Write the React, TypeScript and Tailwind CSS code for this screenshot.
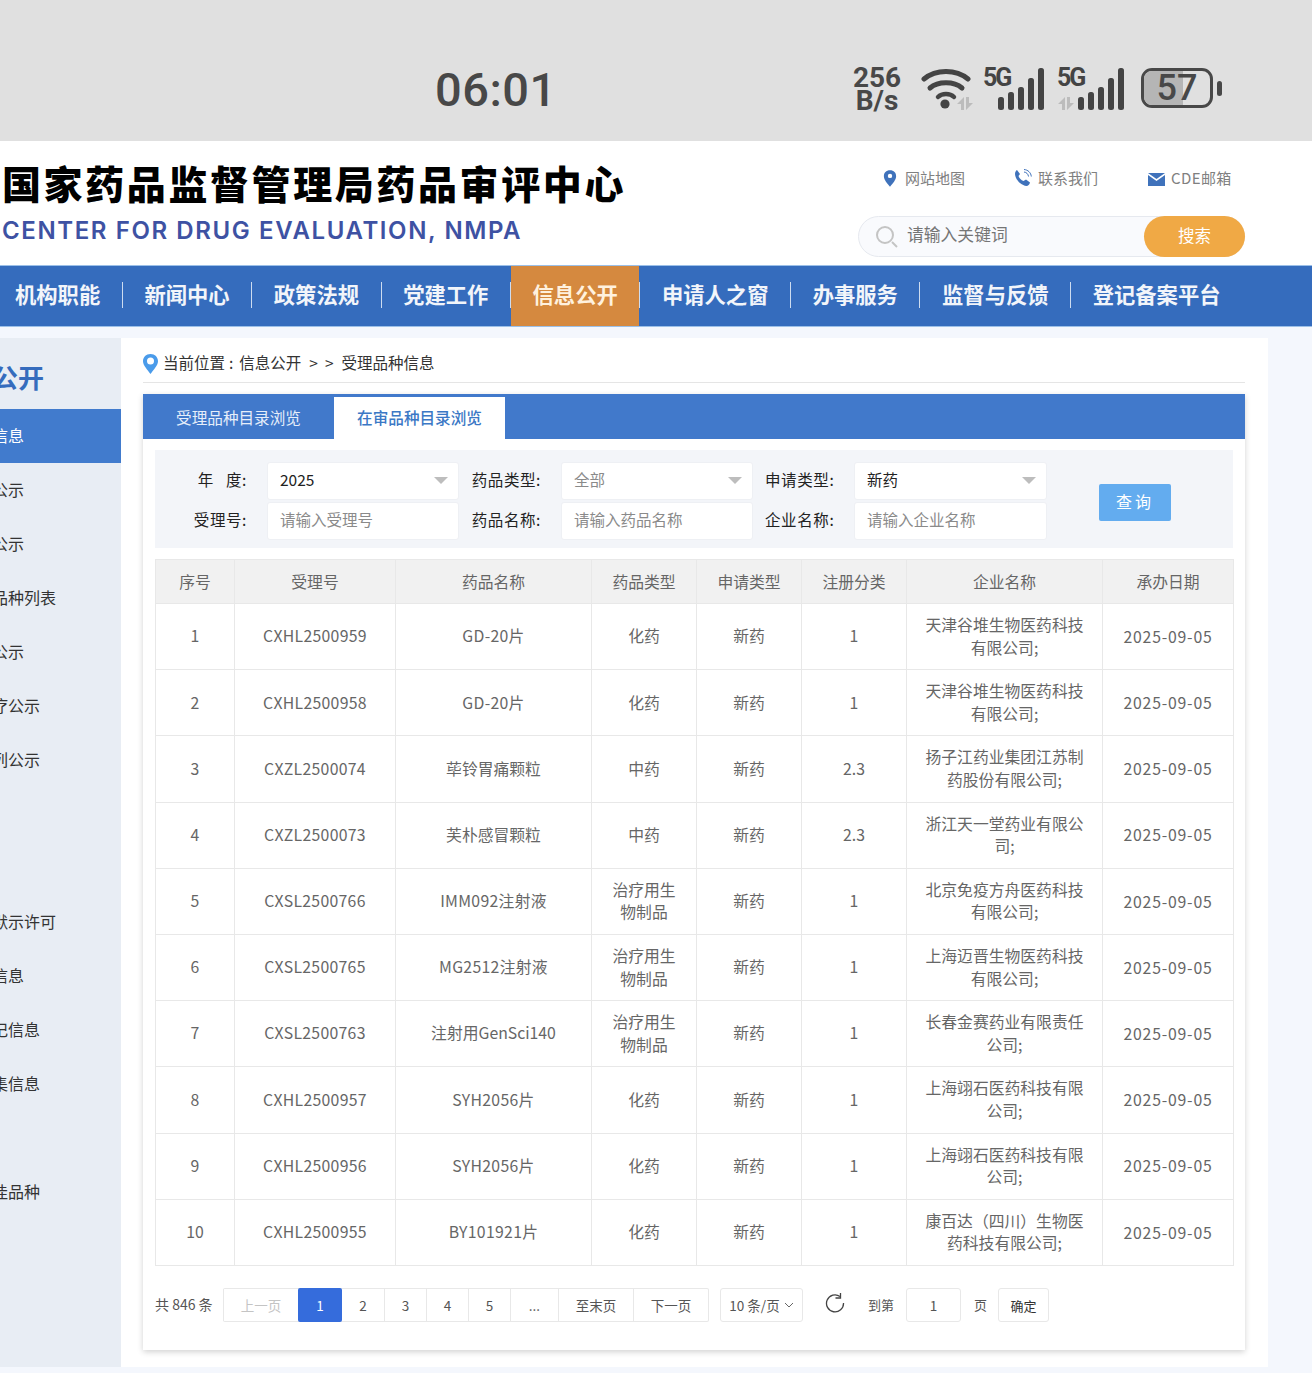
import React from 'react'

const font = { fontFamily: '"Noto Sans CJK SC", Inter, sans-serif' }

const navItems = ['机构职能', '新闻中心', '政策法规', '党建工作', '信息公开', '申请人之窗', '办事服务', '监督与反馈', '登记备案平台']
const sideItems = ['公示', '公示', '品种列表', '公示', '疗公示', '列公示', '', '', '默示许可', '信息', '记信息', '集信息', '', '佳品种']

const rows = [
  ['1', 'CXHL2500959', 'GD-20片', '化药', '新药', '1', '天津谷堆生物医药科技有限公司;'],
  ['2', 'CXHL2500958', 'GD-20片', '化药', '新药', '1', '天津谷堆生物医药科技有限公司;'],
  ['3', 'CXZL2500074', '荜铃胃痛颗粒', '中药', '新药', '2.3', '扬子江药业集团江苏制药股份有限公司;'],
  ['4', 'CXZL2500073', '芙朴感冒颗粒', '中药', '新药', '2.3', '浙江天一堂药业有限公司;'],
  ['5', 'CXSL2500766', 'IMM092注射液', '治疗用生物制品', '新药', '1', '北京免疫方舟医药科技有限公司;'],
  ['6', 'CXSL2500765', 'MG2512注射液', '治疗用生物制品', '新药', '1', '上海迈晋生物医药科技有限公司;'],
  ['7', 'CXSL2500763', '注射用GenSci140', '治疗用生物制品', '新药', '1', '长春金赛药业有限责任公司;'],
  ['8', 'CXHL2500957', 'SYH2056片', '化药', '新药', '1', '上海翊石医药科技有限公司;'],
  ['9', 'CXHL2500956', 'SYH2056片', '化药', '新药', '1', '上海翊石医药科技有限公司;'],
  ['10', 'CXHL2500955', 'BY101921片', '化药', '新药', '1', '康百达（四川）生物医药科技有限公司;'],
]

const heads = ['序号', '受理号', '药品名称', '药品类型', '申请类型', '注册分类', '企业名称', '承办日期']

function Arrows({ x, y }: { x: number; y: number }) {
  return (
    <g transform={`translate(${x} ${y})`} fill="#bcbcbc">
      <path d="M0 7L7 0v13H4V7z" />
      <path d="M9 0h3v6h4l-7 7z" />
    </g>
  )
}

function Signal({ arrows }: { arrows?: boolean }) {
  const left = arrows ? 21 : 15
  return (
    <div className={`relative h-[44px] ${arrows ? 'ml-[12px] w-[67px]' : 'ml-[10px] w-[62px]'}`}>
      <span className="absolute left-0 top-[-3px] text-[25px] font-bold leading-[26px] tracking-[-2px] text-[#444]">5G</span>
      <svg width="67" height="44" viewBox="0 0 67 44" className="absolute left-0 top-0">
        {arrows && <Arrows x={1} y={29} />}
        <rect x={left} y="29" width="6" height="13" rx="2.500" fill="#444" />
        <rect x={left + 10} y="24" width="6" height="18" rx="2.500" fill="#444" />
        <rect x={left + 20} y="19" width="6" height="23" rx="2.500" fill="#444" />
        <rect x={left + 30} y="10" width="6" height="32" rx="2.500" fill="#444" />
        <rect x={left + 40} y="0" width="6" height="42" rx="2.500" fill="#444" />
      </svg>
    </div>
  )
}

function StatusBar() {
  return (
    <div className="flex h-[141px] items-start bg-[#e0e0e0] pl-[435px] pt-[68px] text-[#484848]" style={{ fontFamily: 'Roboto, sans-serif' }}>
      <div className="w-[418px] text-[47px] font-medium leading-[44px] tracking-[0.5px]">06:01</div>
      <div className="-mt-[2px] flex w-[48px] flex-col items-center font-bold">
        <span className="text-[28px] leading-[23px]">256</span>
        <span className="text-[28px] leading-[23px]">B/s</span>
      </div>
      <svg width="52" height="44" viewBox="0 0 52 44" className="ml-[20px]">
        <path d="M3 11C15 1 35 1 47 11" fill="none" stroke="#444" strokeWidth="5" strokeLinecap="round" />
        <path d="M9 20C17 13 33 13 41 20" fill="none" stroke="#444" strokeWidth="5" strokeLinecap="round" />
        <path d="M17 29C21 25 29 25 33 29" fill="none" stroke="#444" strokeWidth="4.500" strokeLinecap="round" />
        <circle cx="24" cy="36" r="4.600" fill="#444" />
        <Arrows x={36} y={29} />
      </svg>
      <Signal />
      <Signal arrows />
      <div className="ml-[17px] flex items-center gap-[4px]">
        <div className="relative flex h-[40px] w-[72px] items-center justify-center overflow-hidden rounded-[11px] border-[3px] border-[#484848]">
          <div className="absolute inset-y-0 left-0 w-[39px] bg-[#b5b5b5]" />
          <span className="relative text-[36px] font-medium leading-[34px]">57</span>
        </div>
        <div className="h-[15px] w-[5px] rounded-full bg-[#484848]" />
      </div>
    </div>
  )
}

function Header() {
  return (
    <div className="flex h-[124px] bg-white">
      <div className="w-[858px] pl-[2px] pt-[12px]">
        <div className="text-[39px] font-black leading-[58px] tracking-[2.600px] text-black">国家药品监督管理局药品审评中心</div>
        <div className="mt-[4px] text-[24px] font-semibold leading-[32px] tracking-[1.600px] text-[#3e52a3]" style={{ fontFamily: 'Inter, sans-serif' }}>
          CENTER FOR DRUG EVALUATION, NMPA
        </div>
      </div>
      <div className="w-[387px]">
        <div className="flex h-[75px] items-center pl-[25px] pb-[1px] text-[15px] text-[#808080]">
          <svg width="14" height="19" viewBox="0 0 16 19">
            <path d="M8 0C3.600 0 1 3 1 6.800 1 11 5 15 8 19c3-4 7-8 7-12.200C15 3 12.400 0 8 0z" fill="#3f72bb" />
            <circle cx="8" cy="6.500" r="2.500" fill="#fff" />
          </svg>
          <span className="ml-[8px] w-[109px]">网站地图</span>
          <svg width="18" height="18" viewBox="0 0 18 18">
            <path d="M3 1l3 4-1.500 2c1 2.500 2.500 4 5 5L12 10.500l4 3c-.5 2-2 3.500-3.500 3.500C7 16.500 1.500 11 1 5c0-2 1-3.500 2-4z" fill="#3f72bb" />
            <path d="M10 3c2.500.3 4.200 2 4.500 4.500M10 .5c4 .3 7 3.300 7.300 7" fill="none" stroke="#3f72bb" strokeWidth="1" />
          </svg>
          <span className="ml-[6px] w-[110px]">联系我们</span>
          <svg width="17" height="13" viewBox="0 0 17 13" className="mt-[3px]">
            <path d="M0 0h17L8.500 6z" fill="#3f72bb" />
            <path d="M0 2l8.500 6L17 2v11H0z" fill="#3f72bb" />
          </svg>
          <span className="ml-[6px] tracking-[0.4px]">CDE邮箱</span>
        </div>
        <div className="flex h-[41px] items-center rounded-full border border-[#e6e9ef] bg-[#f9fafd]">
          <svg width="24" height="24" viewBox="0 0 24 24" className="ml-[16px]">
            <circle cx="10" cy="10" r="8" fill="none" stroke="#c4c4c4" strokeWidth="2" />
            <path d="M17 17l5 5" stroke="#c4c4c4" strokeWidth="2" />
          </svg>
          <span className="-mt-[3px] ml-[8px] flex-1 text-[16.800px] text-[#757575]">请输入关键词</span>
          <button className="-mr-px h-[41px] w-[101px] rounded-full bg-[#f0a945] pb-[2px] text-[16.500px] text-white">搜索</button>
        </div>
      </div>
    </div>
  )
}

function Nav() {
  return (
    <div className="flex h-[62px] items-center border-y border-[#9cc0e8] bg-[#356cbd] pl-[15px] text-[21.300px] font-bold text-[#f2f5fa]">
      {navItems.map((item, i) => (
        <React.Fragment key={item}>
          {i === 4 ? (
            <div className="flex h-full items-center bg-[#d5893f] px-[21.600px] pb-[4px] text-[#fff1de]">{item}</div>
          ) : (
            <div className={i === 0 ? 'pb-[4px] pr-[21.600px]' : 'px-[21.600px] pb-[4px]'}>{item}</div>
          )}
          {i < navItems.length - 1 && <span className="mb-[2px] h-[26px] w-px bg-[#cddcf0]" />}
        </React.Fragment>
      ))}
    </div>
  )
}

function Sidebar() {
  return (
    <div className="w-[121px] shrink-0 overflow-hidden bg-[#e8edf4]">
      <div className="ml-[-8px] h-[71px] pt-[19px] text-[26px] font-bold leading-[40px] text-[#356cbd]">公开</div>
      <div className="flex h-[54px] items-center bg-[#417bcd] pb-[2px] text-white">
        <span className="ml-[-8px] text-[16px]">信息</span>
      </div>
      {sideItems.map((item, i) => (
        <div key={i} className="flex h-[54px] items-center pb-[2px] text-[16px] text-[#333]">
          <span className="ml-[-8px]">{item}</span>
        </div>
      ))}
    </div>
  )
}

function Field({ label, value, placeholder, select, labelWidth }: { label: string; value: string; placeholder?: boolean; select?: boolean; labelWidth: string }) {
  return (
    <div className="flex items-center gap-5">
      <div className={`${labelWidth} whitespace-pre pb-[2px] text-right text-[15.500px] tracking-[0.6px] text-[#222]`}>{label}</div>
      <div className={`flex h-[38px] flex-1 items-center justify-between rounded-[3px] border border-[#eef0f4] bg-white pb-[2px] pl-3 pr-[10px] text-[15.500px] ${placeholder ? 'text-[#8a8a8a]' : 'text-[#222]'}`}>
        {value}
        {select && <span className="h-0 w-0 border-x-[7px] border-t-[7px] border-x-transparent border-t-[#bdbdbd]" />}
      </div>
    </div>
  )
}

function Filters() {
  return (
    <div className="flex bg-[#f3f5f9] pb-2 pt-3">
      <div className="grid grid-cols-[304px_282px_282px] gap-x-3 gap-y-[2px]">
        <Field labelWidth="w-[92px]" label={'年\u2002\u2009度:'} value="2025" select />
        <Field labelWidth="w-[70px]" label="药品类型:" value="全部" placeholder select />
        <Field labelWidth="w-[69px]" label="申请类型:" value="新药" select />
        <Field labelWidth="w-[92px]" label="受理号:" value="请输入受理号" placeholder />
        <Field labelWidth="w-[70px]" label="药品名称:" value="请输入药品名称" placeholder />
        <Field labelWidth="w-[69px]" label="企业名称:" value="请输入企业名称" placeholder />
      </div>
      <button className="ml-[52px] mt-[22px] h-[37px] w-[72px] rounded-[2px] bg-[#63acef] pb-[3px] text-[16px] tracking-[3px] text-white">查询</button>
    </div>
  )
}

function DataTable() {
  return (
    <table className="mt-[11px] w-[1078px] table-fixed border-collapse text-center text-[15.800px] leading-[22.500px] text-[#666]">
      <colgroup>
        <col className="w-[79px]" />
        <col className="w-[161px]" />
        <col className="w-[196px]" />
        <col className="w-[105px]" />
        <col className="w-[105px]" />
        <col className="w-[105px]" />
        <col className="w-[196px]" />
        <col className="w-[131px]" />
      </colgroup>
      <thead>
        <tr className="h-[44px] bg-[#f1f1f1]">
          {heads.map((h) => (
            <th key={h} className="border border-[#e8e8e8] pt-[2px] font-normal">{h}</th>
          ))}
        </tr>
      </thead>
      <tbody>
        {rows.map((row) => (
          <tr key={row[0]} className="h-[66.200px]">
            {row.map((cell, i) => (
              <td key={i} className={`border border-[#e8e8e8] px-[18px] py-0 ${/^[A-Z]/.test(cell) ? 'tracking-[0.3px]' : ''}`}>{cell}</td>
            ))}
            <td className="border border-[#e8e8e8] px-0 pt-[1px] tracking-[0.800px]">2025-09-05</td>
          </tr>
        ))}
      </tbody>
    </table>
  )
}

function Pager() {
  const cell = 'flex h-full items-center justify-center border-l border-[#e8e8e8]'
  return (
    <div className="mt-[22px] flex h-[34px] items-center text-[13.500px] text-[#555]">
      <span className="w-[68px] text-[14px]">共 846 条</span>
      <div className="flex h-full w-[486px] rounded-[2px] border border-l-0 border-[#e8e8e8]">
        <div className={`${cell} w-[75px] text-[#c4c4c4]`}>上一页</div>
        <div className="mt-[-1px] flex h-[34px] w-[44px] items-center justify-center rounded-[2px] bg-[#356cdc] text-white">1</div>
        <div className="flex h-full w-[42px] items-center justify-center">2</div>
        <div className={`${cell} w-[42px]`}>3</div>
        <div className={`${cell} w-[42px]`}>4</div>
        <div className={`${cell} w-[42px]`}>5</div>
        <div className={`${cell} w-[48px]`}>...</div>
        <div className={`${cell} w-[75px]`}>至末页</div>
        <div className={`${cell} w-[75px]`}>下一页</div>
      </div>
      <div className="ml-[11px] flex h-full w-[83px] items-center justify-center gap-[4px] rounded-[3px] border border-[#e8e8e8]">
        10 条/页
        <svg width="10" height="6" viewBox="0 0 10 6"><path d="M1 1l4 4 4-4" fill="none" stroke="#666" /></svg>
      </div>
      <svg width="20" height="20" viewBox="0 0 20 20" className="ml-[22px] mt-[-3px]">
        <path d="M15 3.500A8.500 8.500 0 1 0 18.500 10" fill="none" stroke="#444" strokeWidth="1.300" />
        <path d="M15.500 0v5h-5" fill="none" stroke="#444" strokeWidth="1.300" />
      </svg>
      <span className="ml-[23px] w-[38px] text-[13px]">到第</span>
      <div className="flex h-full w-[55px] items-center justify-center rounded-[3px] border border-[#e8e8e8]">1</div>
      <span className="ml-[13px] w-[24px] text-[13px]">页</span>
      <div className="flex h-full w-[51px] items-center justify-center rounded-[3px] border border-[#e8e8e8] pt-[2px] text-[13px] text-[#333]">确定</div>
    </div>
  )
}

export default function App() {
  return (
    <div className="h-[1373px] w-[1312px] overflow-hidden bg-[#f4f7fd]" style={font}>
      <StatusBar />
      <Header />
      <Nav />
      <div className="mt-[11px] flex h-[1029px]">
        <Sidebar />
        <div className="w-[1147px] bg-white pl-[22px] pr-[23px]">
          <div className="flex h-[45px] items-center border-b border-[#e5e5e5] pt-[6px] text-[15.500px] text-[#333]">
            <svg width="15" height="20" viewBox="0 0 15 20" className="mr-[5px] mt-[2px]">
              <path d="M7.500 0C3 0 0 3.200 0 7.200 0 11.500 4.500 15.500 7.500 20c3-4.500 7.500-8.500 7.500-12.800C15 3.200 12 0 7.500 0z" fill="#4a9bea" />
              <circle cx="7.500" cy="7" r="3.500" fill="#fff" />
            </svg>
            <span>当前位置</span>
            <span className="ml-[4px]">:</span>
            <span className="ml-[6px]">信息公开</span>
            <span className="ml-[8px]">&gt;</span>
            <span className="ml-[7px]">&gt;</span>
            <span className="ml-[8px]">受理品种信息</span>
          </div>
          <div className="mt-[11px] h-[956px] bg-white px-[12px] shadow-[0_2px_6px_rgba(0,0,0,0.18)]">
            <div className="mx-[-12px] flex h-[45px] items-end bg-[#4179cb] text-[15.600px]">
              <div className="flex h-[42px] w-[191px] items-center justify-center text-[#e6eefa]">受理品种目录浏览</div>
              <div className="flex h-[42px] w-[171px] items-center justify-center bg-white font-medium text-[#3b78c5]">在审品种目录浏览</div>
            </div>
            <div className="mt-[11px]">
              <Filters />
            </div>
            <DataTable />
            <Pager />
          </div>
        </div>
      </div>
    </div>
  )
}
